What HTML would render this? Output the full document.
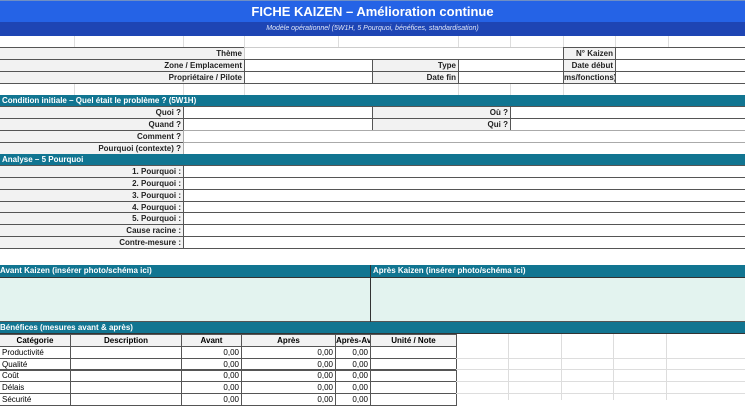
<!DOCTYPE html>
<html><head><meta charset="utf-8"><style>
*{margin:0;padding:0;box-sizing:border-box}
body{width:745px;height:400px;overflow:hidden;background:#fff;font-family:"Liberation Sans",sans-serif;position:relative}
.c{position:absolute;font-size:8px;line-height:11px;white-space:nowrap;overflow:hidden;border:1px solid #555;padding:0 2px}
.l{background:#f2f2f2;font-weight:bold;text-align:right;color:#222}
.v{background:#fff}
.h{position:absolute;background:#117591;color:#fff;font-size:8px;font-weight:bold;line-height:12px;padding-left:2px;border-bottom:1px solid #333;white-space:nowrap;overflow:hidden}
.g{position:absolute;background:#ddd}
.n{text-align:right}
.th{background:#f2f2f2;font-weight:bold;text-align:center}
</style></head><body>
<div style="position:absolute;left:0;top:0;width:745px;height:22px;background:#2563e6;color:#fff;font-weight:bold;font-size:13px;line-height:22px;text-align:center;border-top:1px solid #6f8fc4">FICHE KAIZEN – Amélioration continue</div>
<div style="position:absolute;left:0;top:22px;width:745px;height:14px;background:#1e45b4;color:#dfe6f7;font-style:italic;font-size:7px;line-height:14px;text-align:center">Modèle opérationnel (5W1H, 5 Pourquoi, bénéfices, standardisation)</div>
<!-- faint grid rows -->
<div class="g" style="left:0;top:47px;width:745px;height:1px"></div>
<div class="g" style="left:74px;top:36px;width:1px;height:12px"></div>
<div class="g" style="left:183px;top:36px;width:1px;height:12px"></div>
<div class="g" style="left:244px;top:36px;width:1px;height:12px"></div>
<div class="g" style="left:338px;top:36px;width:1px;height:12px"></div>
<div class="g" style="left:458px;top:36px;width:1px;height:12px"></div>
<div class="g" style="left:510px;top:36px;width:1px;height:12px"></div>
<div class="g" style="left:563px;top:36px;width:1px;height:12px"></div>
<div class="g" style="left:615px;top:36px;width:1px;height:12px"></div>
<div class="g" style="left:668px;top:36px;width:1px;height:12px"></div>
<div class="g" style="left:74px;top:83px;width:1px;height:12px"></div>
<div class="g" style="left:183px;top:83px;width:1px;height:12px"></div>
<div class="g" style="left:244px;top:83px;width:1px;height:12px"></div>
<div class="g" style="left:458px;top:83px;width:1px;height:12px"></div>
<div class="g" style="left:510px;top:83px;width:1px;height:12px"></div>
<div class="g" style="left:563px;top:83px;width:1px;height:12px"></div>
<!-- Top info -->
<div class="c l" style="left:-1px;top:47px;width:246px;height:13px">Thème</div>
<div class="c v" style="left:244px;top:47px;width:320px;height:13px;border-color:#ccc"></div>
<div class="c l" style="left:563px;top:47px;width:53px;height:13px">N° Kaizen</div>
<div class="c v" style="left:615px;top:47px;width:131px;height:13px"></div>
<div class="c l" style="left:-1px;top:59px;width:246px;height:13px">Zone / Emplacement</div>
<div class="c v" style="left:244px;top:59px;width:129px;height:13px"></div>
<div class="c l" style="left:372px;top:59px;width:87px;height:13px">Type</div>
<div class="c v" style="left:458px;top:59px;width:106px;height:13px"></div>
<div class="c l" style="left:563px;top:59px;width:53px;height:13px">Date début</div>
<div class="c v" style="left:615px;top:59px;width:131px;height:13px"></div>
<div class="c l" style="left:-1px;top:71px;width:246px;height:13px">Propriétaire / Pilote</div>
<div class="c v" style="left:244px;top:71px;width:129px;height:13px"></div>
<div class="c l" style="left:372px;top:71px;width:87px;height:13px">Date fin</div>
<div class="c v" style="left:458px;top:71px;width:106px;height:13px"></div>
<div class="c l" style="left:563px;top:71px;width:53px;height:13px;text-align:left;padding:0">ms/fonctions)</div>
<div class="c v" style="left:615px;top:71px;width:131px;height:13px"></div>
<!-- 5W1H -->
<div class="h" style="left:0;top:95px;width:745px;height:12px">Condition initiale – Quel était le problème ? (5W1H)</div>
<div class="c l" style="left:-1px;top:106px;width:185px;height:13px">Quoi ?</div>
<div class="c v" style="left:183px;top:106px;width:190px;height:13px"></div>
<div class="c l" style="left:372px;top:106px;width:139px;height:13px">Où ?</div>
<div class="c v" style="left:510px;top:106px;width:236px;height:13px"></div>
<div class="c l" style="left:-1px;top:118px;width:185px;height:13px">Quand ?</div>
<div class="c v" style="left:183px;top:118px;width:190px;height:13px"></div>
<div class="c l" style="left:372px;top:118px;width:139px;height:13px">Qui ?</div>
<div class="c v" style="left:510px;top:118px;width:236px;height:13px"></div>
<div class="c l" style="left:-1px;top:130px;width:185px;height:13px">Comment ?</div>
<div class="c v" style="left:183px;top:130px;width:563px;height:13px;border-color:#aaa"></div>
<div class="c l" style="left:-1px;top:142px;width:185px;height:13px">Pourquoi (contexte) ?</div>
<div class="c v" style="left:183px;top:142px;width:563px;height:13px;border-color:#aaa"></div>
<!-- 5 pourquoi -->
<div class="h" style="left:0;top:154px;width:745px;height:12px">Analyse – 5 Pourquoi</div>
<div class="c l" style="left:-1px;top:165px;width:185px;height:13px">1. Pourquoi :</div>
<div class="c v" style="left:183px;top:165px;width:563px;height:13px"></div>
<div class="c l" style="left:-1px;top:177px;width:185px;height:13px">2. Pourquoi :</div>
<div class="c v" style="left:183px;top:177px;width:563px;height:13px"></div>
<div class="c l" style="left:-1px;top:189px;width:185px;height:13px">3. Pourquoi :</div>
<div class="c v" style="left:183px;top:189px;width:563px;height:13px"></div>
<div class="c l" style="left:-1px;top:201px;width:185px;height:13px">4. Pourquoi :</div>
<div class="c v" style="left:183px;top:201px;width:563px;height:13px"></div>
<div class="c l" style="left:-1px;top:212px;width:185px;height:13px">5. Pourquoi :</div>
<div class="c v" style="left:183px;top:212px;width:563px;height:13px"></div>
<div class="c l" style="left:-1px;top:224px;width:185px;height:13px">Cause racine :</div>
<div class="c v" style="left:183px;top:224px;width:563px;height:13px"></div>
<div class="c l" style="left:-1px;top:236px;width:185px;height:13px">Contre-mesure :</div>
<div class="c v" style="left:183px;top:236px;width:563px;height:13px"></div>
<!-- Avant / Après -->
<div class="h" style="left:0;top:265px;width:371px;height:13px;padding-left:0">Avant Kaizen (insérer photo/schéma ici)</div>
<div class="h" style="left:370px;top:265px;width:375px;height:13px;border-left:1px solid #333">Après Kaizen (insérer photo/schéma ici)</div>
<div style="position:absolute;left:0;top:278px;width:745px;height:44px;background:#e3f3ef;border-bottom:1px solid #555"></div>
<div style="position:absolute;left:370px;top:278px;width:1px;height:44px;background:#333"></div>
<div class="h" style="left:0;top:322px;width:745px;height:12px;padding-left:0">Bénéfices (mesures avant &amp; après)</div>
<!-- table -->
<div class="c th" style="left:-1px;top:334px;width:72px;height:13px">Catégorie</div>
<div class="c th" style="left:70px;top:334px;width:112px;height:13px">Description</div>
<div class="c th" style="left:181px;top:334px;width:61px;height:13px">Avant</div>
<div class="c th" style="left:241px;top:334px;width:95px;height:13px">Après</div>
<div class="c th" style="left:335px;top:334px;width:36px;height:13px;padding:0">Après-Avant</div>
<div class="c th" style="left:370px;top:334px;width:87px;height:13px">Unité / Note</div>
<div style="position:absolute;left:0;top:346px">
<div class="c" style="left:-1px;top:0;width:72px;height:13px">Productivité</div>
<div class="c" style="left:70px;top:0;width:112px;height:13px"></div>
<div class="c n" style="left:181px;top:0;width:61px;height:13px">0,00</div>
<div class="c n" style="left:241px;top:0;width:95px;height:13px">0,00</div>
<div class="c n" style="left:335px;top:0;width:36px;height:13px">0,00</div>
<div class="c" style="left:370px;top:0;width:87px;height:13px"></div>
<div class="c" style="left:-1px;top:12px;width:72px;height:13px">Qualité</div>
<div class="c" style="left:70px;top:12px;width:112px;height:13px"></div>
<div class="c n" style="left:181px;top:12px;width:61px;height:13px">0,00</div>
<div class="c n" style="left:241px;top:12px;width:95px;height:13px">0,00</div>
<div class="c n" style="left:335px;top:12px;width:36px;height:13px">0,00</div>
<div class="c" style="left:370px;top:12px;width:87px;height:13px"></div>
<div class="c" style="left:-1px;top:23px;width:72px;height:13px">Coût</div>
<div class="c" style="left:70px;top:23px;width:112px;height:13px"></div>
<div class="c n" style="left:181px;top:23px;width:61px;height:13px">0,00</div>
<div class="c n" style="left:241px;top:23px;width:95px;height:13px">0,00</div>
<div class="c n" style="left:335px;top:23px;width:36px;height:13px">0,00</div>
<div class="c" style="left:370px;top:23px;width:87px;height:13px"></div>
<div class="c" style="left:-1px;top:35px;width:72px;height:13px">Délais</div>
<div class="c" style="left:70px;top:35px;width:112px;height:13px"></div>
<div class="c n" style="left:181px;top:35px;width:61px;height:13px">0,00</div>
<div class="c n" style="left:241px;top:35px;width:95px;height:13px">0,00</div>
<div class="c n" style="left:335px;top:35px;width:36px;height:13px">0,00</div>
<div class="c" style="left:370px;top:35px;width:87px;height:13px"></div>
<div class="c" style="left:-1px;top:47px;width:72px;height:13px">Sécurité</div>
<div class="c" style="left:70px;top:47px;width:112px;height:13px"></div>
<div class="c n" style="left:181px;top:47px;width:61px;height:13px">0,00</div>
<div class="c n" style="left:241px;top:47px;width:95px;height:13px">0,00</div>
<div class="c n" style="left:335px;top:47px;width:36px;height:13px">0,00</div>
<div class="c" style="left:370px;top:47px;width:87px;height:13px"></div>
</div>
<div class="g" style="left:456px;top:358px;width:289px;height:1px"></div>
<div class="g" style="left:456px;top:369px;width:289px;height:1px"></div>
<div class="g" style="left:456px;top:381px;width:289px;height:1px"></div>
<div class="g" style="left:456px;top:393px;width:289px;height:1px"></div>
<div class="g" style="left:508px;top:334px;width:1px;height:66px"></div>
<div class="g" style="left:561px;top:334px;width:1px;height:66px"></div>
<div class="g" style="left:613px;top:334px;width:1px;height:66px"></div>
<div class="g" style="left:666px;top:334px;width:1px;height:66px"></div>
</body></html>
